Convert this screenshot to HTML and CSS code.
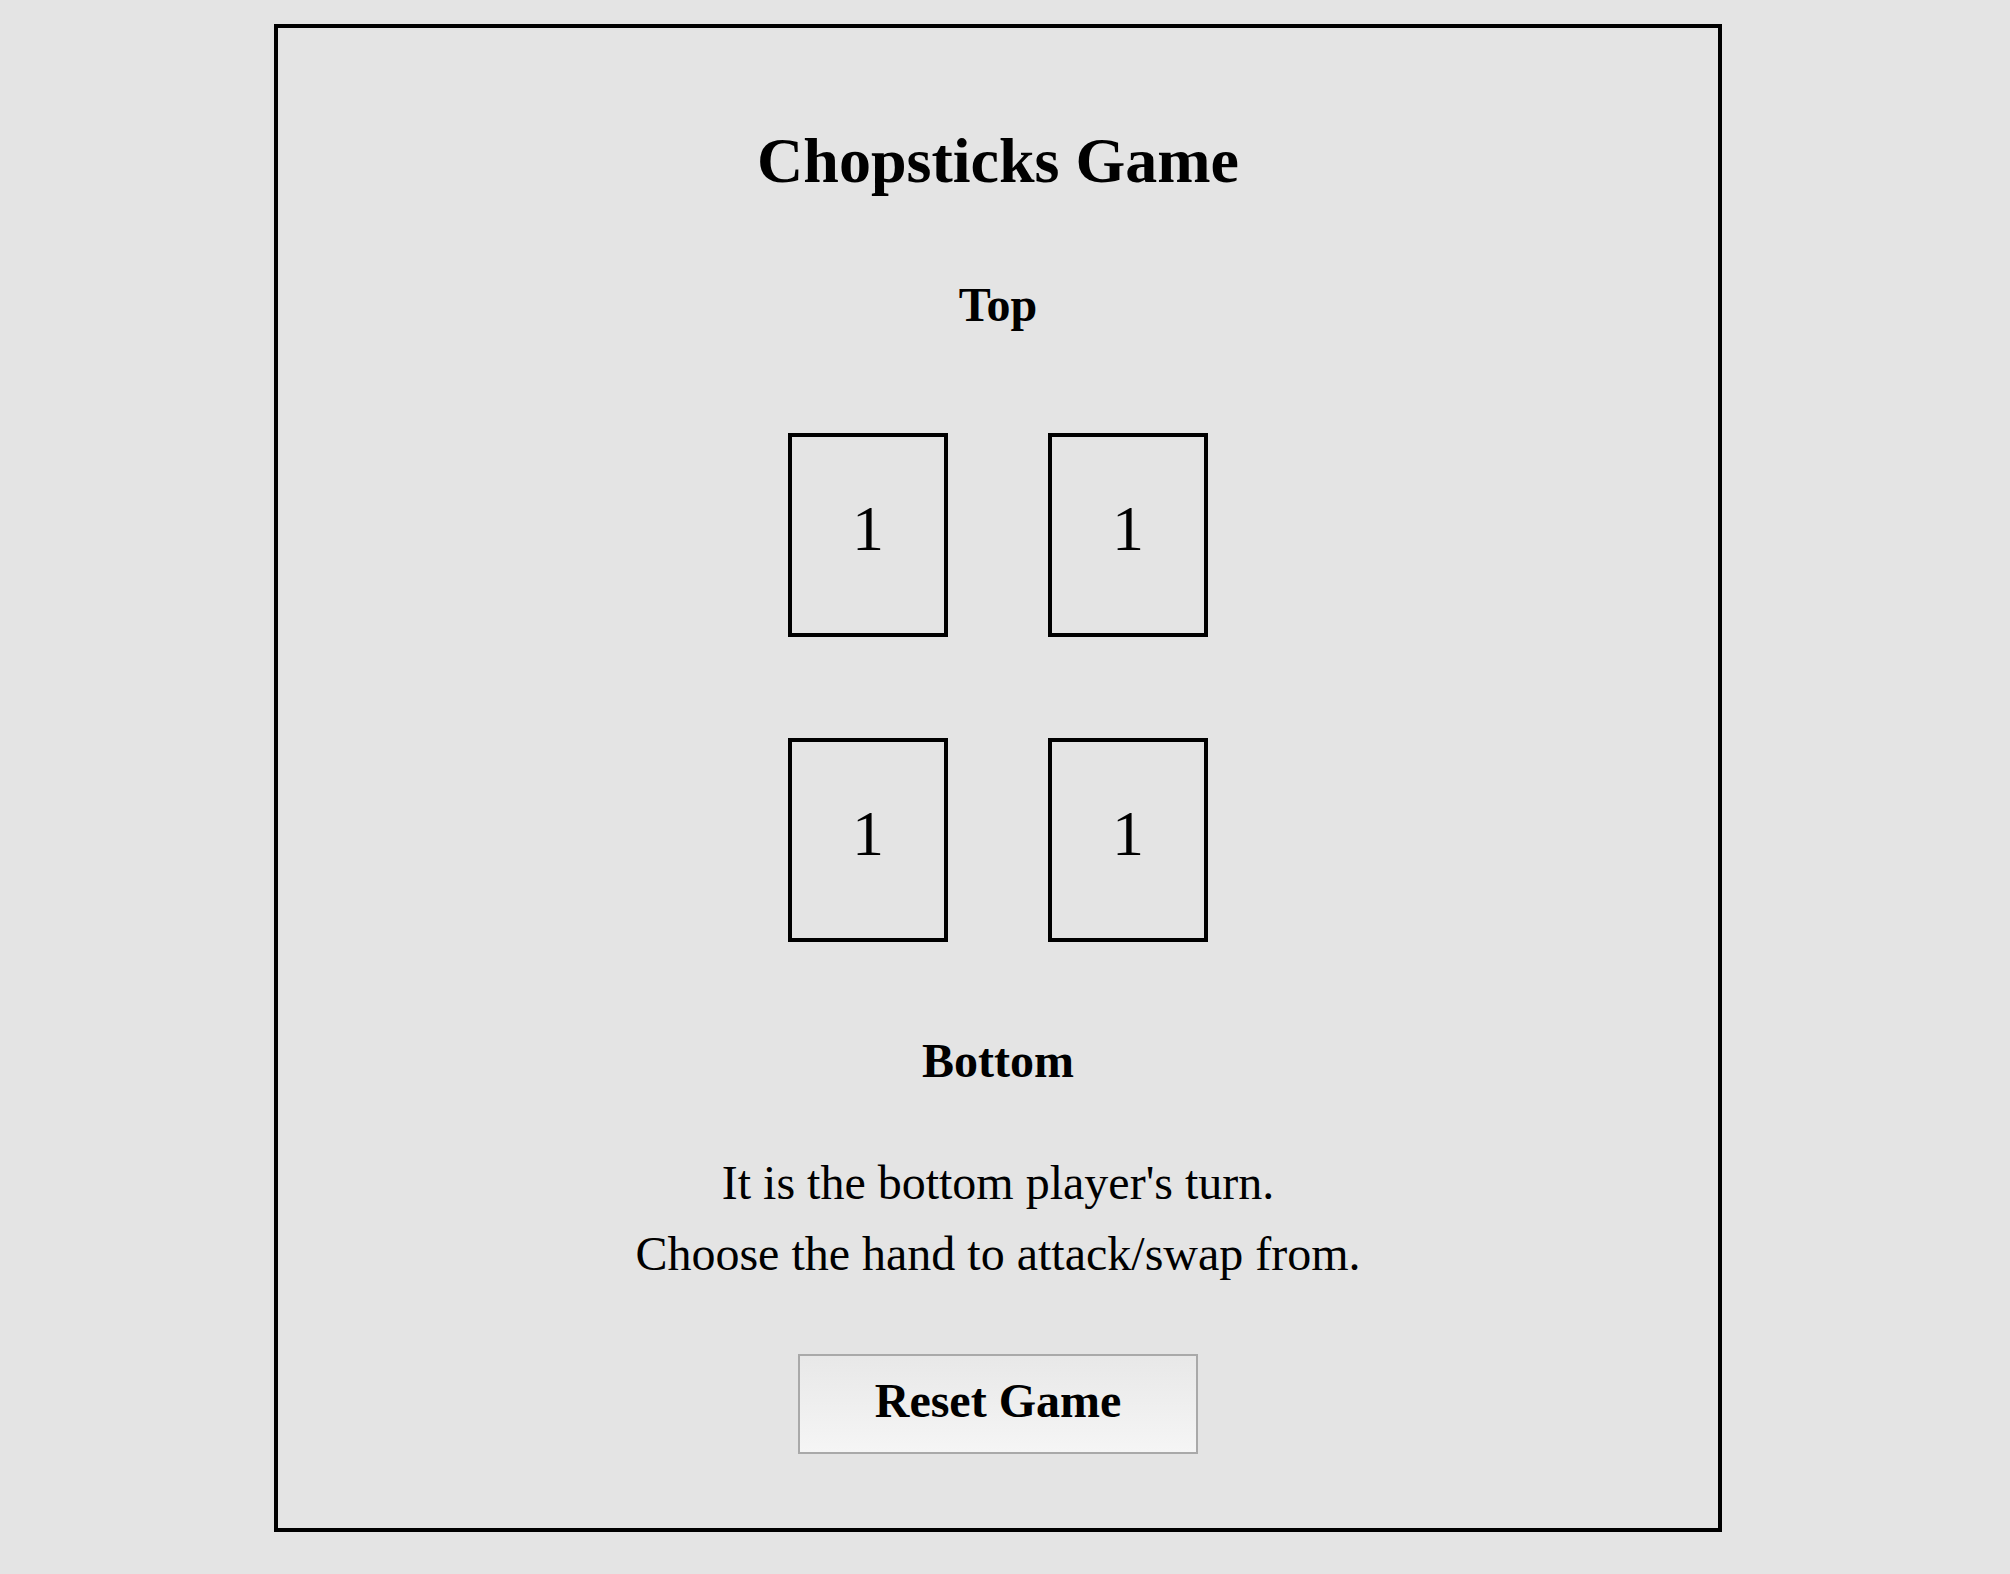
FILE: index.html
```html
<!DOCTYPE html>
<html lang="en">
<head>
<meta charset="utf-8">
<title>Chopsticks Game</title>
<link rel="stylesheet" href="styles.css">
</head>
<body>
  <main class="game">
    <h1 class="title">Chopsticks Game</h1>
    <h2 class="player player-top">Top</h2>
    <div class="board">
      <div class="hands">
        <div class="hand">1</div>
        <div class="hand">1</div>
      </div>
      <div class="hands">
        <div class="hand">1</div>
        <div class="hand">1</div>
      </div>
    </div>
    <h2 class="player player-bottom">Bottom</h2>
    <p class="status">It is the bottom player's turn.<br>Choose the hand to attack/swap from.</p>
    <button class="reset" type="button">Reset Game</button>
  </main>
</body>
</html>
```

FILE: styles.css
```css
html, body {
  margin: 0;
  padding: 0;
  background: #e4e4e4;
}

body {
  padding-top: 24px;
  font-family: "Liberation Serif", "Times New Roman", serif;
  color: #000;
}

.game {
  box-sizing: border-box;
  width: 1448px;
  margin-left: 274px;
  border: 4px solid #000;
  display: flex;
  flex-direction: column;
  align-items: center;
  text-align: center;
}

.title {
  margin: 94px 0 0;
  font-size: 64px;
  line-height: 77px;
  font-weight: bold;
}

.player {
  margin: 0;
  font-size: 48px;
  line-height: 58px;
  font-weight: bold;
}

.player-top {
  margin-top: 77px;
}

.board {
  margin-top: 99px;
  display: flex;
  flex-direction: column;
  gap: 101px;
}

.hands {
  display: flex;
  justify-content: center;
  gap: 100px;
}

.hand {
  box-sizing: border-box;
  width: 160px;
  height: 204px;
  border: 4px solid #000;
  padding-top: 60px;
  font-size: 64px;
  line-height: 64px;
  text-align: center;
}

.player-bottom {
  margin-top: 90px;
}

.status {
  margin: 57px 0 0;
  font-size: 48px;
  line-height: 71px;
}

.reset {
  box-sizing: border-box;
  margin: 65px 0 74px;
  width: 400px;
  height: 100px;
  padding: 0 0 6px;
  border: 2px solid #a9a9a9;
  border-radius: 0;
  background: linear-gradient(to bottom, #e8e8e8, #f5f5f5);
  font-family: "Liberation Serif", "Times New Roman", serif;
  font-size: 48px;
  line-height: 58px;
  font-weight: bold;
  color: #000;
}
```
